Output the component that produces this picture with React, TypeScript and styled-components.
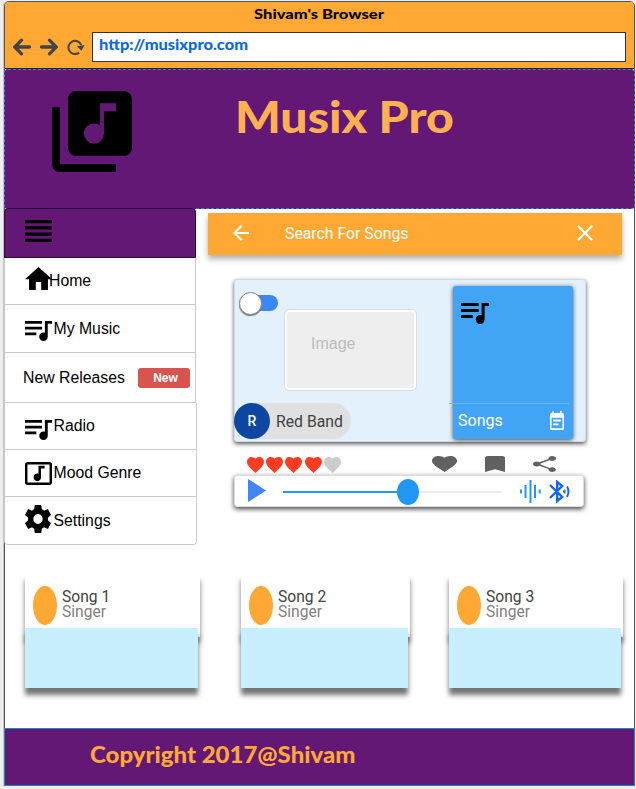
import React from 'react';
import styled, { createGlobalStyle } from 'styled-components';
import {
  MdLibraryMusic, MdHome, MdQueueMusic, MdViewHeadline, MdMusicVideo,
  MdArrowBack, MdClose, MdEventNote, MdFavorite, MdBookmark, MdShare,
} from 'react-icons/md';

const orange = '#ffa834';
const purple = '#631876';

const GlobalStyle = createGlobalStyle`
  * { box-sizing: border-box; }
  body { margin: 0; background: #eeeeee; font-family: 'Liberation Sans', Arial, sans-serif; color: #000; }
  svg { display: block; flex: none; }
`;

const Page = styled.div`
  width: 636px; height: 789px; padding: 1px 1px 0 4px; overflow: hidden;
`;
const Window = styled.div`
  width: 631px; height: 785px; background: #fff; border: 1px solid #555;
  border-radius: 5px 5px 0 0; display: flex; flex-direction: column;
  box-shadow: -1px 0 0 #c4c4c4;
`;
const Display = styled.span<{ $size: number; $stretch: number; $centered?: boolean }>`
  display: inline-block; font-family: Lato, sans-serif; font-weight: 900; white-space: pre;
  font-size: ${p => p.$size}px; line-height: 1;
  transform: scaleX(${p => p.$stretch}); transform-origin: ${p => (p.$centered ? 'center' : 'left')};
`;
const Chrome = styled.header`
  height: 67px; flex: none; background: ${orange}; border-bottom: 1px solid #2b2420;
  border-radius: 4px 4px 0 0;
`;
const TitleBar = styled.div`
  height: 30px; display: flex; justify-content: center; padding-top: 5px;
`;
const AddressBar = styled.div`
  display: flex; align-items: center; padding: 0 8px; height: 30px; color: #444;
`;
const NavIcons = styled.div`
  display: flex; align-items: center; gap: 9px; width: 79px; flex: none;
`;
const Address = styled.div`
  flex: 1; height: 30px; border: 1px solid #333; background: #fff; color: #0b6ae0; padding: 3px 6px;
`;
const Hero = styled.section`
  height: 140px; flex: none; margin: 0 -1px; padding: 21px 0 0 47px; background: ${purple};
  border: 1px dashed #2f7fe6; border-radius: 4px; display: flex; gap: 104px;
`;
const HeroTitle = styled.h1`
  margin: 4px 0 0 -1px; color: #ffb152; font-size: 43px; font-weight: inherit; line-height: 1;
`;
const Body = styled.div`
  height: 366px; flex: none; display: flex; margin-top: -1px;
`;
const Sidebar = styled.nav`
  width: 194px; flex: none; margin-left: -1px; display: flex; flex-direction: column;
`;
const MenuHead = styled.div`
  width: 192px; height: 50px; padding: 11px 20px; background: ${purple};
  border: 1px solid #270c3e; border-radius: 4px 4px 0 0;
`;
const MenuItem = styled.div<{ $h: number; $wide?: boolean; $last?: boolean; $gap?: number }>`
  width: ${p => (p.$wide ? 193 : 192)}px; height: ${p => p.$h}px; flex: none;
  padding: 0 5px 0 20px; display: flex; align-items: center; gap: ${p => p.$gap ?? 1.5}px;
  border: 1px solid #ccc; border-top: 0; font-size: 15.8px; line-height: 18px;
  border-radius: ${p => (p.$last ? '0 0 4px 4px' : '0')};
`;
const IconSlot = styled.span<{ $y: number }>`
  display: block; margin-top: ${p => p.$y}px;
`;
const HomeLabel = styled.span` margin-left: -3px; `;
const ReleaseLabel = styled.span` margin: 0 0 0 -2px; flex: 1; white-space: nowrap; `;
const NewBadge = styled.span`
  width: 52px; height: 20px; border-radius: 3px; background: #d9534f; color: #fff; flex: none;
  font-weight: bold; font-size: 12px; line-height: 20px; text-align: center; padding-left: 3px;
`;
const Main = styled.main`
  width: 414px; margin: 5px 0 0 10px; display: flex; flex-direction: column;
`;
const SearchBar = styled.div`
  height: 42px; flex: none; padding: 0 29px 2px 25px; background: ${orange}; color: #fff;
  display: flex; align-items: center; box-shadow: 0 4px 6px rgba(0,0,0,.32);
  font: 15.8px Roboto, sans-serif;
`;
const SearchLabel = styled.span` flex: 1; margin-left: 36px; `;
const Feature = styled.section`
  width: 352px; height: 163px; flex: none; margin: 24px 0 0 26px; background: #e3f1fd;
  border: 1px solid #d2dce4; border-radius: 3px; padding: 6px 11px 2px 0; display: flex;
  box-shadow: 0 2px 4px rgba(0,0,0,.65);
`;
const FeatureLeft = styled.div`
  width: 182px; display: flex; flex-direction: column; justify-content: space-between;
`;
const FeatureTop = styled.div` display: flex; `;
const Toggle = styled.div`
  width: 35px; height: 16px; margin: 9px 0 0 8px; background: #3c87f7; border-radius: 8px;
  display: flex; align-items: center;
`;
const Knob = styled.div`
  width: 23px; height: 23px; margin-left: -4px; flex: none; border-radius: 50%; background: #fff;
  border: 1px solid #888; box-shadow: 0 1px 1px #777;
`;
const Placeholder = styled.div`
  width: 133px; height: 82px; margin: 23px 0 0 6px; background: #eee; color: #bcbcbc; flex: none;
  border: 1px solid #ddd; border-radius: 5px; box-shadow: inset 0 0 0 2px #fff;
  font-size: 16px; padding: 25px 0 0 26px;
`;
const Chip = styled.div`
  width: 117px; height: 36px; border-radius: 18px; background: #e0e0e0; color: #424242;
  display: flex; align-items: center; gap: 6px; font: 15.8px Roboto, sans-serif; white-space: nowrap;
  margin-left: -1px; padding-bottom: 0;
`;
const Avatar = styled.span`
  width: 36px; height: 36px; border-radius: 50%; background: #0d47a1; color: #fff;
  font: 500 14px/37px Roboto, sans-serif; text-align: center; flex: none;
`;
const SongsPanel = styled.div`
  width: 120px; height: 153px; margin-left: 36px; background: #42a4f5; border-radius: 3px; flex: none;
  box-shadow: 0 1px 4px rgba(0,0,0,.7); display: flex; flex-direction: column;
  justify-content: space-between; padding-top: 17px;
`;
const PanelIcon = styled.div` margin-left: 8px; color: #000; `;
const PanelFooter = styled.div`
  width: 120px; height: 36px; margin-left: -4px; border-top: 1px solid #6bb7f3; color: #fff;
  display: flex; align-items: center; justify-content: space-between; padding: 0 5px 2px 9px;
  font: 16px Roboto, sans-serif;
`;
const Actions = styled.div`
  height: 33px; flex: none; display: flex; padding: 14px 0 0 39px; color: #616161;
`;
const Rating = styled.div` display: flex; gap: 2.2px; width: 185px; margin-top: 1px; `;
const Rate = styled(MdFavorite)<{ $on: boolean }>` color: ${p => (p.$on ? '#ff3b22' : '#ccc')}; `;
const ActionIcons = styled.div` display: flex; gap: 28px; `;
const Player = styled.div`
  width: 350px; height: 32px; flex: none; margin-left: 26px; padding: 0 12px 0 13px; background: #fff;
  border: 1px solid #ddd; border-radius: 3px; display: flex; align-items: center;
  box-shadow: 0 2px 5px rgba(0,0,0,.75);
`;
const PlayIcon = styled.svg` width: 18px; height: 23px; margin-top: -1px; `;
const Track = styled.div`
  width: 218px; height: 2px; margin: 1px 19px 0 17px; background: #e8eaf6; flex: none;
  display: flex; align-items: center;
`;
const Played = styled.div` width: 115px; height: 2px; background: #2196f3; `;
const Thumb = styled.div`
  width: 22px; height: 26px; border-radius: 50%; background: #2196f3; margin: 1px 0 0 -1px;
`;
const BluetoothSlot = styled.span` margin-left: 8px; `;
const Songs = styled.section`
  height: 154px; flex: none; display: flex; padding: 0 0 0 20px;
`;
const Song = styled.article<{ $w: number; $gap: number }>`
  width: ${p => p.$w}px; margin-right: ${p => p.$gap}px; flex: none;
`;
const SongInfo = styled.div`
  height: 63px; padding: 12px 0 0 8px; background: #fff; display: flex; gap: 5px;
  box-shadow: 0 6px 5px rgba(0,0,0,.5);
  font: 15.6px/15px Roboto, sans-serif; color: #424242;
`;
const Disc = styled.span` width: 24px; height: 39px; border-radius: 50%; background: ${orange}; flex: none; `;
const SongText = styled.div` padding-top: 4px; `;
const Singer = styled.div` color: #808080; `;
const SongBody = styled.div`
  height: 60px; margin: -9px 2px 0 0; background: #c8effd; position: relative;
  box-shadow: 0 7px 5px rgba(0,0,0,.55);
`;
const Footer = styled.footer`
  height: 58px; flex: none; margin: 0 -1px; padding: 15px 0 0 85px; background: ${purple};
  color: ${orange}; border: 1px solid #1688c5;
`;

const stretch = (viewBox: string, width: number, height: number) => ({
  viewBox, preserveAspectRatio: 'none', style: { width, height },
});

const Arrow = ({ forward }: { forward?: boolean }) => (
  <svg width="18" height="18" viewBox="0 0 18 18" fill="none" stroke="currentColor" strokeWidth="3.3" strokeLinecap="round">
    {forward ? <path d="M1.5 9H16M9.5 2.2L16.2 9l-6.7 6.8" /> : <path d="M16.5 9H2M8.5 2.2L1.8 9l6.7 6.8" />}
  </svg>
);

const Reload = () => (
  <svg width="18" height="18" viewBox="0 0 18 18">
    <path d="M12.2 14.6A6.6 6.6 0 1 1 14.2 7" fill="none" stroke="currentColor" strokeWidth="2" />
    <path d="M9.8 8.3L17.6 7l-3.2 5.8z" fill="currentColor" />
  </svg>
);

const Gear = () => (
  <svg width="26" height="28" viewBox="2.2 2 19.6 20" preserveAspectRatio="none">
    <path d="M19.43 12.98c.04-.32.07-.64.07-.98s-.03-.66-.07-.98l2.11-1.65c.19-.15.24-.42.12-.64l-2-3.46c-.12-.22-.39-.3-.61-.22l-2.49 1c-.52-.4-1.08-.73-1.69-.98l-.38-2.65C14.46 2.18 14.25 2 14 2h-4c-.25 0-.46.18-.49.42l-.38 2.65c-.61.25-1.17.59-1.69.98l-2.49-1c-.23-.09-.49 0-.61.22l-2 3.46c-.13.22-.07.49.12.64l2.11 1.65c-.04.32-.07.65-.07.98s.03.66.07.98l-2.11 1.65c-.19.15-.24.42-.12.64l2 3.46c.12.22.39.3.61.22l2.49-1c.52.4 1.08.73 1.69.98l.38 2.65c.03.24.24.42.49.42h4c.25 0 .46-.18.49-.42l.38-2.65c.61-.25 1.17-.59 1.69-.98l2.49 1c.23.09.49 0 .61-.22l2-3.46c.12-.22.07-.49-.12-.64l-2.11-1.65zM12 15.5c-1.93 0-3.5-1.57-3.5-3.5s1.57-3.5 3.5-3.5 3.5 1.57 3.5 3.5-1.57 3.5-3.5 3.5z" />
  </svg>
);

const Wave = () => (
  <svg width="21" height="23" viewBox="0 0 21 23" stroke="#2196f3" strokeWidth="2">
    <path d="M1 9.5v4M5.5 5v13M10.5 0v23M15 5v13M19.7 9.5v4" />
  </svg>
);

const Bluetooth = () => (
  <svg width="21" height="23" viewBox="0 0 21 23" fill="none" stroke="#1565f5" strokeWidth="2.4">
    <path d="M1 5l12.2 12-5 4V2l5 4L1 18" />
    <path d="M14 11.5l2-1.8v3.6z" fill="#1565f5" strokeWidth="1" />
    <path d="M18 6.5q3 5 0 10.5" strokeWidth="2" />
  </svg>
);

const Queue = () => <MdQueueMusic {...stretch('3 6 19 14', 27, 20)} />;

const songs = [
  { title: 'Song 1', width: 175, gap: 41 },
  { title: 'Song 2', width: 169, gap: 39 },
  { title: 'Song 3', width: 174, gap: 0 },
];

export default function App() {
  return (
    <Page>
      <GlobalStyle />
      <Window>
        <Chrome>
          <TitleBar><Display $size={14} $stretch={1.18} $centered>Shivam's Browser</Display></TitleBar>
          <AddressBar>
            <NavIcons><Arrow /><Arrow forward /><Reload /></NavIcons>
            <Address><Display $size={15} $stretch={1.095}>http://musixpro.com</Display></Address>
          </AddressBar>
        </Chrome>
        <Hero>
          <MdLibraryMusic {...stretch('2 2 20 20', 80, 81)} />
          <HeroTitle><Display $size={43} $stretch={1.12}>Musix Pro</Display></HeroTitle>
        </Hero>
        <Body>
          <Sidebar>
            <MenuHead><MdViewHeadline {...stretch('4 5 16 14', 27, 22)} /></MenuHead>
            <MenuItem $h={47} $gap={0}>
              <IconSlot $y={-5}><MdHome {...stretch('2 3 20 17', 27, 23)} /></IconSlot>
              <HomeLabel>Home</HomeLabel>
            </MenuItem>
            <MenuItem $h={48}><IconSlot $y={4}><Queue /></IconSlot><span>My Music</span></MenuItem>
            <MenuItem $h={50}><ReleaseLabel>New Releases</ReleaseLabel><NewBadge>New</NewBadge></MenuItem>
            <MenuItem $h={47} $wide><IconSlot $y={8}><Queue /></IconSlot><span>Radio</span></MenuItem>
            <MenuItem $h={47} $wide><MdMusicVideo {...stretch('1 3 22 18', 27, 23)} /><span>Mood Genre</span></MenuItem>
            <MenuItem $h={48} $wide $last $gap={2.5}><IconSlot $y={-3}><Gear /></IconSlot><span>Settings</span></MenuItem>
          </Sidebar>
          <Main>
            <SearchBar>
              <MdArrowBack {...stretch('4 4 16 16', 16, 16)} />
              <SearchLabel>Search For Songs</SearchLabel>
              <MdClose {...stretch('5 5 14 14', 16, 16)} />
            </SearchBar>
            <Feature>
              <FeatureLeft>
                <FeatureTop>
                  <Toggle><Knob /></Toggle>
                  <Placeholder>Image</Placeholder>
                </FeatureTop>
                <Chip><Avatar>R</Avatar>Red Band</Chip>
              </FeatureLeft>
              <SongsPanel>
                <PanelIcon><MdQueueMusic {...stretch('3 6 19 14', 28, 21)} /></PanelIcon>
                <PanelFooter>Songs<MdEventNote {...stretch('3 1 18 21', 14, 20)} /></PanelFooter>
              </SongsPanel>
            </Feature>
            <Actions>
              <Rating>
                {[1, 2, 3, 4, 5].map(n => <Rate key={n} $on={n < 5} {...stretch('2 3 20 18.35', 17, 16)} />)}
              </Rating>
              <ActionIcons>
                <MdFavorite {...stretch('2 3 20 18.35', 25, 16)} />
                <MdBookmark {...stretch('5 3 14 18', 20, 16)} />
                <MdShare {...stretch('3 2 18 20', 23, 16)} />
              </ActionIcons>
            </Actions>
            <Player>
              <PlayIcon viewBox="0 0 18 23"><path d="M0 0l18 11.5L0 23z" fill="#4285f4" /></PlayIcon>
              <Track><Played /><Thumb /></Track>
              <Wave />
              <BluetoothSlot><Bluetooth /></BluetoothSlot>
            </Player>
          </Main>
        </Body>
        <Songs>
          {songs.map(s => (
            <Song key={s.title} $w={s.width} $gap={s.gap}>
              <SongInfo><Disc /><SongText>{s.title}<Singer>Singer</Singer></SongText></SongInfo>
              <SongBody />
            </Song>
          ))}
        </Songs>
        <Footer><Display $size={22} $stretch={1.09}>Copyright 2017@Shivam</Display></Footer>
      </Window>
    </Page>
  );
}
